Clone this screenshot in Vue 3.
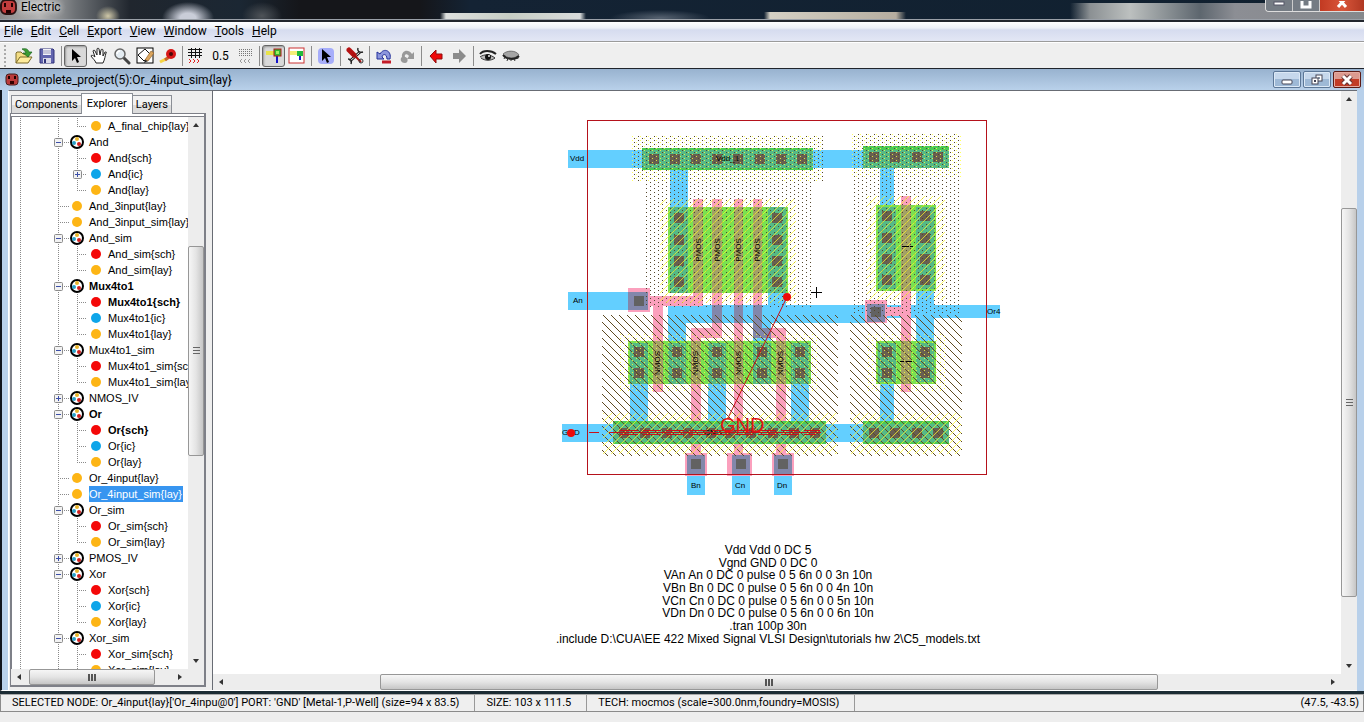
<script setup>
import { ref } from 'vue'

const menus = ['File', 'Edit', 'Cell', 'Export', 'View', 'Window', 'Tools', 'Help']

// [level, kind, label, expander, bold, last child]
const treeRows = [
  [2, 'lay', 'A_final_chip{lay}', '', false, true],
  [1, 'group', 'And', '-'],
  [2, 'sch', 'And{sch}'],
  [2, 'ic', 'And{ic}', '+'],
  [2, 'lay', 'And{lay}', '', false, true],
  [1, 'lay', 'And_3input{lay}'],
  [1, 'lay', 'And_3input_sim{lay}'],
  [1, 'group', 'And_sim', '-'],
  [2, 'sch', 'And_sim{sch}'],
  [2, 'lay', 'And_sim{lay}', '', false, true],
  [1, 'group', 'Mux4to1', '-', true],
  [2, 'sch', 'Mux4to1{sch}', '', true],
  [2, 'ic', 'Mux4to1{ic}'],
  [2, 'lay', 'Mux4to1{lay}', '', false, true],
  [1, 'group', 'Mux4to1_sim', '-'],
  [2, 'sch', 'Mux4to1_sim{sch}'],
  [2, 'lay', 'Mux4to1_sim{lay}', '', false, true],
  [1, 'group', 'NMOS_IV', '+'],
  [1, 'group', 'Or', '-', true],
  [2, 'sch', 'Or{sch}', '', true],
  [2, 'ic', 'Or{ic}'],
  [2, 'lay', 'Or{lay}', '', false, true],
  [1, 'lay', 'Or_4input{lay}'],
  [1, 'lay', 'Or_4input_sim{lay}'],
  [1, 'group', 'Or_sim', '-'],
  [2, 'sch', 'Or_sim{sch}'],
  [2, 'lay', 'Or_sim{lay}', '', false, true],
  [1, 'group', 'PMOS_IV', '+'],
  [1, 'group', 'Xor', '-'],
  [2, 'sch', 'Xor{sch}'],
  [2, 'ic', 'Xor{ic}'],
  [2, 'lay', 'Xor{lay}', '', false, true],
  [1, 'group', 'Xor_sim', '-'],
  [2, 'sch', 'Xor_sim{sch}'],
  [2, 'lay', 'Xor_sim{lay}', '', false, true],
].map(([level, kind, label, expander = '', bold = false, last = false]) => ({
  level, kind, label, expander, bold, last,
}))
const selected = ref('Or_4input_sim{lay}')
const dotColor = { sch: '#f40808', ic: '#0ea5e9', lay: '#fdb515' }

// Layout geometry: [x, y, width, height]
const metal = [
  [568, 150, 300, 18], [670, 168, 18, 40], [568, 292, 80, 18],
  [668, 305, 218, 18], [886, 305, 114, 13], [668, 323, 18, 18], [768, 293, 18, 12],
  [753, 323, 18, 18], [630, 384, 18, 38], [708, 384, 18, 38], [791, 384, 18, 38],
  [562, 424, 302, 18], [687, 455, 18, 40], [732, 455, 18, 40], [774, 455, 18, 40],
  [880, 168, 14, 38], [916, 291, 18, 50], [880, 384, 14, 38],
]
const poly = [
  [693, 199, 10, 107], [712, 199, 10, 139], [734, 199, 9, 256], [753, 199, 9, 139],
  [649, 296, 54, 10], [653, 306, 10, 86], [691, 328, 31, 10], [691, 338, 10, 117],
  [762, 328, 24, 10], [776, 338, 10, 117], [628, 288, 22, 24],
  [685, 453, 22, 23], [727, 453, 25, 23], [772, 453, 22, 23],
  [901, 196, 10, 196], [887, 307, 14, 9], [865, 300, 22, 23],
]
const active = [
  [668, 207, 120, 86], [628, 341, 183, 43], [876, 205, 60, 86], [876, 341, 60, 43],
]
const bars = [[642, 148, 171, 22], [863, 146, 86, 22], [613, 421, 213, 23], [863, 421, 86, 23]]
const teal = [
  [642, 150, 171, 18], [863, 150, 86, 18], [613, 424, 213, 18], [863, 424, 86, 18],
  [670, 207, 18, 86], [768, 207, 18, 86],
  [630, 343, 18, 41], [668, 343, 18, 41], [708, 343, 18, 41], [753, 343, 18, 41], [791, 343, 18, 41],
  [878, 207, 18, 82], [916, 207, 18, 82], [878, 343, 18, 39], [916, 343, 18, 39],
]
const olive = [
  [693, 207, 10, 86], [712, 207, 10, 86], [734, 207, 9, 86], [753, 207, 9, 86],
  [653, 341, 10, 43], [691, 341, 10, 43], [734, 341, 9, 43], [776, 341, 10, 43],
  [901, 205, 10, 86], [901, 341, 10, 43],
]
const purple = [
  [628, 292, 20, 18], [712, 305, 10, 18], [734, 305, 9, 18], [753, 305, 9, 23], [753, 328, 18, 10],
  [687, 455, 18, 20], [732, 455, 18, 20], [774, 455, 18, 20], [867, 304, 18, 18],
]
const cut = (xs, ys) => xs.flatMap((x) => ys.map((y) => [x - 5, y - 5, 10, 10]))
const cuts = [
  ...cut([654, 675, 696, 717, 738, 760, 781, 802], [159]),
  ...cut([679, 777], [218, 240, 261, 282]),
  ...cut([639, 677, 717, 762, 800], [352, 373]),
  ...cut([624, 645, 667, 688, 711, 730, 751, 773, 794, 815], [433]),
  ...cut([874, 895, 917, 938], [157, 433]),
  ...cut([887, 925], [216, 238, 259, 280]),
  ...cut([887, 925], [352, 373]),
]
const vias = cut([639], [301]).concat(cut([696, 741, 783], [464]), cut([876], [312]))
const layers = [
  ['#63cfff', metal], ['#fba0bd', poly], ['#7ae250', active], ['#4acb55', bars],
  ['#55b986', teal], ['#a3a166', olive], ['#8287ab', purple], ['#685f50', cuts], ['#626262', vias],
]

// Stipple patterns, one pixel at a time, as short horizontal strokes
const stipple = (rects, test) => {
  let d = ''
  for (const [x0, y0, w, h] of rects)
    for (let y = y0; y < y0 + h; y++)
      for (let x = x0; x < x0 + w; x++) if (test(x, y)) d += `M${x} ${y + 0.5}h1`
  return d
}
const dots = (shift) => (x, y) =>
  ((x + shift) % 8 === 0 && y % 4 === 0) || ((x + shift) % 8 === 4 && y % 4 === 2)
const textures = [
  ['#54462c', stipple([[643, 135, 170, 172], [631, 135, 12, 47], [813, 135, 11, 47], [851, 133, 110, 181]], dots(2))],
  ['#5e4a22', stipple([[602, 315, 236, 141], [850, 315, 112, 141]], (x, y) => (x - y + 800) % 8 === 0)],
  ['#ffff3ccc', stipple([[631, 135, 193, 47], [851, 133, 110, 44], [619, 333, 200, 59], [867, 333, 79, 59]], dots(0))],
  ['#fbf628bb', stipple([[660, 199, 136, 104], [867, 196, 78, 104], [603, 413, 234, 41], [851, 413, 110, 41]], (x, y) => (x + y) % 8 === 0)],
]
const ports = [
  [570, 161, 'Vdd'], [573, 303, 'An'], [562, 435, 'GND'], [691, 488, 'Bn'], [735, 488, 'Cn'],
  [777, 488, 'Dn'], [987, 314, 'Or4'], [716, 161, 'Vdd_1'], [704, 435, 'GND'],
]
const gates = [
  [701, 250, 'PMOS'], [720, 250, 'PMOS'], [741, 250, 'PMOS'], [760, 250, 'PMOS'],
  [660, 363, 'NMOS'], [698, 363, 'NMOS'], [741, 363, 'NMOS'], [783, 363, 'NMOS'],
]
const spice = [
  [554, 'Vdd Vdd 0 DC 5'],
  [567, 'Vgnd GND 0 DC 0'],
  [579, 'VAn An 0 DC 0 pulse 0 5 6n 0 0 3n 10n'],
  [592, 'VBn Bn 0 DC 0 pulse 0 5 6n 0 0 4n 10n'],
  [605, 'VCn Cn 0 DC 0 pulse 0 5 6n 0 0 5n 10n'],
  [617, 'VDn Dn 0 DC 0 pulse 0 5 6n 0 0 6n 10n'],
  [630, '.tran 100p 30n'],
  [643, '.include D:\\CUA\\EE 422 Mixed Signal VLSI Design\\tutorials hw 2\\C5_models.txt'],
]
</script>

<template>
  <div class="app">
    <header class="titlebar">
      <svg class="logo" width="17" height="16" viewBox="0 0 17 16">
        <rect x="1" y="0" width="15" height="14" rx="5" fill="#c23d3d" stroke="#2a1010" stroke-width="2" />
        <path d="M5 3v4M12 3v4" stroke="#200" stroke-width="2" />
        <path d="M6 10h5v3h-5z" fill="#200" />
      </svg>
      <span class="app-name">Electric</span>
      <div class="frame-buttons">
        <button aria-label="Minimize"><svg width="12" height="6"><rect x="1" y="1" width="10" height="3" fill="#fff" stroke="#556" /></svg></button>
        <button aria-label="Maximize"><svg width="12" height="9"><rect x="2" y="-3" width="8" height="9" fill="none" stroke="#fff" stroke-width="3" /></svg></button>
        <button class="close" aria-label="Close"><svg width="12" height="9"><path d="M2-3 10 6M10-3 2 6" stroke="#fff" stroke-width="3" /></svg></button>
      </div>
    </header>

    <nav class="menubar">
      <button v-for="m in menus" :key="m"><u>{{ m[0] }}</u>{{ m.slice(1) }}</button>
    </nav>

    <div class="toolbar">
      <button aria-label="Open"><svg width="18" height="18" viewBox="0 0 18 18">
        <path d="M1 16V6l1-1h4l2 2h5v3" fill="#f3dd84" stroke="#7b6a2a" />
        <path d="M1 16 5 10h12l-4 6z" fill="#ffec9c" stroke="#7b6a2a" />
        <path d="M7 2c4-1 6 0 7 3h3l-4 5-5-4h3c-1-2-2-3-4-4z" fill="#3b9b32" stroke="#17611a" stroke-width=".7" />
      </svg></button>
      <button aria-label="Save"><svg width="18" height="18" viewBox="0 0 18 18">
        <path d="M2 2h13l1 1v13H2z" fill="#6265ae" stroke="#30337a" />
        <rect x="5" y="2" width="8" height="6" fill="#f2f2f8" /><path d="M5 4h8M5 6h8" stroke="#99b" />
        <rect x="5" y="11" width="8" height="5" fill="#d8d8e8" /><rect x="6" y="12" width="2" height="4" fill="#30337a" />
      </svg></button>
      <i class="sep"></i>
      <button class="pressed" aria-label="Select"><svg width="18" height="18" viewBox="0 0 18 18">
        <path d="M5 2v12l3-3 2 5 2-1-2-5h4z" fill="#000" />
      </svg></button>
      <button aria-label="Pan"><svg width="18" height="18" viewBox="0 0 18 18">
        <path d="M6 16c-1-3-3-4-5-7 0-1 2-1 4 1L3 4c0-1 2-1 2 0l2 4V2c0-1 2-1 2 0l1 6 1-5c0-1 2-1 2 0v6l2-4c1 0 2 0 1 1-1 3-1 6-3 10z" fill="#fff" stroke="#222" />
      </svg></button>
      <button aria-label="Zoom"><svg width="18" height="18" viewBox="0 0 18 18">
        <path d="m11 11 5 5" stroke="#444" stroke-width="3" stroke-linecap="round" />
        <circle cx="7" cy="7" r="5" fill="#e4ecf2" stroke="#666" stroke-width="1.5" />
        <path d="M4 7c0-2 1-3 3-3" stroke="#fff" stroke-width="1.5" fill="none" />
      </svg></button>
      <button aria-label="Outline edit"><svg width="18" height="18" viewBox="0 0 18 18">
        <rect x="1" y="1" width="16" height="15" fill="#fff" stroke="#000" />
        <path d="m2 8 7-6 6 6-7 6z" fill="none" stroke="#111" />
        <path d="m9 13 6-9 3 2-6 8z" fill="#dba55e" stroke="#8a5a20" stroke-width=".6" /><path d="m9 13-1 3 4-2z" fill="#222" />
      </svg></button>
      <button aria-label="Measure"><svg width="18" height="18" viewBox="0 0 18 18">
        <path d="m1 15 8-4" stroke="#f5d442" stroke-width="3" /><path d="m6 13 4-3" stroke="#c6632c" stroke-width="3" />
        <circle cx="12" cy="7" r="5" fill="#d81818" /><circle cx="12" cy="7" r="2" fill="#4a0808" />
      </svg></button>
      <i class="sep"></i>
      <button class="narrow" aria-label="Full grid"><svg width="18" height="18" viewBox="0 0 18 18" shape-rendering="crispEdges">
        <path d="M5.500 1v10M9.500 1v10M13.500 1v10M2 2.500h14M2 5.500h14M2 8.500h14" stroke="#111" />
        <path d="m3 12 2 2-2 2m4-4 2 2-2 2m4-4 2 2-2 2" fill="none" stroke="#d22" shape-rendering="auto" />
      </svg></button>
      <button class="grid-size">0.5</button>
      <button class="narrow" aria-label="Small grid"><svg width="18" height="18" viewBox="0 0 18 18">
        <path d="M2 2.500h14M2 4.500h14M2 6.500h14M2 8.500h14" stroke="#777" stroke-dasharray="1 1" />
        <path d="m5 12-2 2 2 2m4-4-2 2 2 2m4-4-2 2 2 2" fill="none" stroke="#999" />
      </svg></button>
      <i class="sep"></i>
      <button class="pressed" aria-label="Select objects"><svg width="18" height="18" viewBox="0 0 18 18">
        <path d="M1 4h8v4H1z" fill="#e8e34a" /><path d="M12 8v8" stroke="#1414c8" stroke-width="2" />
        <rect x="9" y="2" width="7" height="7" fill="#2fb92f" stroke="#b01818" /><rect x="11" y="4" width="3" height="3" fill="#9fef5f" />
      </svg></button>
      <button aria-label="Select area"><svg width="18" height="18" viewBox="0 0 18 18">
        <rect x="1" y="1" width="15" height="15" fill="#fff" stroke="#c33" /><path d="M2 4h7v4H2z" fill="#f4ee78" />
        <path d="M12 7v6" stroke="#1414c8" stroke-width="2" /><rect x="9" y="4" width="6" height="5" fill="#23b93b" />
      </svg></button>
      <i class="sep"></i>
      <button aria-label="Special select"><svg width="18" height="18" viewBox="0 0 18 18">
        <rect x="1" y="1" width="16" height="16" rx="4" fill="#a6adfa" /><path d="M5 2v12l3-3 2 5 2-1-2-5h4z" fill="#000" />
      </svg></button>
      <i class="sep"></i>
      <button aria-label="Preferences"><svg width="18" height="18" viewBox="0 0 18 18">
        <path d="m4 14 10-9" stroke="#222" stroke-width="3" /><path d="m4 14 10-9" stroke="#fff" />
        <path d="M12 1c-1 3 1 5 5 4M2 12c3 0 4 2 3 5" fill="none" stroke="#222" stroke-width="1.5" />
        <path d="m3 3 5 5" stroke="#b51212" stroke-width="5" stroke-linecap="round" /><path d="m7 7 8 8" stroke="#a11" stroke-width="2" />
        <circle cx="15" cy="14" r="2" fill="none" stroke="#333" />
      </svg></button>
      <i class="sep"></i>
      <button aria-label="Undo"><svg width="18" height="18" viewBox="0 0 18 18">
        <path d="M2 5v7h7L7 10c1-4 5-3 5 2h3c2-8-6-12-10-5z" fill="#8c96dc" stroke="#23309a" />
        <path d="M7 15h9" stroke="#c41c28" stroke-width="3" />
      </svg></button>
      <button aria-label="Redo"><svg width="18" height="18" viewBox="0 0 18 18">
        <path d="M16 5v7H9l2-3c-2-3-5-2-4 1 3 0 4 6 0 6-5 0-5-5-3-6-1-6 6-9 10-3z" fill="#999" />
      </svg></button>
      <i class="sep"></i>
      <button aria-label="Back"><svg width="18" height="18" viewBox="0 0 18 18"><path d="m3 9 6-6v4h6v5H9v4z" fill="#ef0808" stroke="#910c0c" /></svg></button>
      <button aria-label="Forward"><svg width="18" height="18" viewBox="0 0 18 18"><path d="m16 9-7-7v4H3v6h6v4z" fill="#8b8b8b" /></svg></button>
      <i class="sep"></i>
      <button aria-label="Expand"><svg width="18" height="18" viewBox="0 0 18 18">
        <path d="M1 7c3-4 11-4 16 0" fill="none" stroke="#222" stroke-width="2" /><path d="M1 10c4-3 10-3 15 1-4 3-10 3-14 0" fill="#bbb" stroke="#333" />
        <circle cx="9" cy="10" r="3" fill="#111" /><circle cx="10" cy="9" r="1" fill="#eee" />
      </svg></button>
      <button aria-label="Unexpand"><svg width="18" height="18" viewBox="0 0 18 18">
        <path d="M1 7C5 3 14 3 17 8c-4 4-12 4-16-1z" fill="#a5a5a5" stroke="#555" stroke-width=".7" />
        <path d="M1 8c4 5 12 5 16 1" fill="none" stroke="#222" stroke-width="2" />
        <path d="M3 10l-1 2M6 11l-1 3M9 12v2M12 12l1 2M15 10l1 2" fill="none" stroke="#333" />
      </svg></button>
    </div>

    <section class="document">
      <div class="doc-title">
        <svg width="14" height="14" viewBox="0 0 14 14">
          <rect x="1" y="1" width="12" height="11" rx="3" fill="#bb3b3b" stroke="#472020" />
          <path d="M4 3v3M10 3v3" stroke="#200" stroke-width="2" /><path d="M5 8h4v3H5z" fill="#300" />
        </svg>
        <h1>complete_project(5):Or_4input_sim{lay}</h1>
        <div class="doc-buttons">
          <button aria-label="Minimize cell"><svg width="14" height="12"><rect x="2" y="6" width="10" height="4" rx="1" fill="#fff" stroke="#445" /></svg></button>
          <button aria-label="Restore cell"><svg width="14" height="12">
            <rect x="6" y="1" width="6" height="6" fill="#fff" stroke="#445" /><rect x="8" y="3" width="2" height="2" fill="#89a" />
            <rect x="2" y="4" width="6" height="6" fill="#fff" stroke="#445" /><rect x="4" y="6" width="2" height="2" fill="#445" />
          </svg></button>
          <button class="close" aria-label="Close cell"><svg width="14" height="12">
            <path d="m3 2 8 8M11 2l-8 8" stroke="#633" stroke-width="5" /><path d="m3 2 8 8M11 2l-8 8" stroke="#fff" stroke-width="3" />
          </svg></button>
        </div>
      </div>

      <div class="doc-body">
        <aside class="side">
          <div class="tabs">
            <button>Components</button><button class="current">Explorer</button><button>Layers</button>
          </div>
          <div class="tab-page">
            <div class="tree-area">
              <ul class="tree">
                <li v-for="(row, i) in treeRows" :key="i">
                  <svg :width="row.level === 2 ? 96 : 77" height="16">
                    <g stroke="#8a8a8a" stroke-dasharray="1 1">
                      <path d="M8.500 0v16M46.500 0v16" />
                      <path v-if="row.level === 1" d="M46 8.500h12" />
                      <path v-if="row.level === 2" :d="`M65.5 0V${row.last ? 8 : 16}M65 8.5h10`" />
                    </g>
                    <g v-if="row.expander" :transform="`translate(${row.level === 2 ? 61 : 42} 4)`">
                      <rect x=".5" y=".5" width="8" height="8" rx="1" fill="#f2f2f2" stroke="#8b8b8b" />
                      <path :d="row.expander === '+' ? 'M2 4.500h5M4.500 2v5' : 'M2 4.500h5'" stroke="#3c4fa8" />
                    </g>
                    <g v-if="row.kind === 'group'">
                      <circle cx="65" cy="8" r="6" fill="#fff" stroke="#000" stroke-width="2" />
                      <circle cx="65" cy="5" r="2" fill="#e8b52c" /><circle cx="62" cy="9" r="2" fill="#2aa0c8" />
                      <circle cx="67" cy="10" r="2" fill="#cf1d1d" />
                    </g>
                    <circle v-else :cx="row.level === 2 ? 84 : 65" cy="8" r="5" :fill="dotColor[row.kind]" />
                  </svg>
                  <button
                    :class="{ bold: row.bold, selected: row.label === selected }"
                    @click="selected = row.label"
                  >{{ row.label }}</button>
                </li>
              </ul>
              <div class="scroll vertical">
                <button class="up" aria-label="Scroll tree up"></button>
                <div class="track tree-v"><span class="thumb"></span></div>
                <button class="down" aria-label="Scroll tree down"></button>
              </div>
            </div>
            <div class="scroll horizontal">
              <button class="left" aria-label="Scroll tree left"></button>
              <div class="track tree-h"><span class="thumb"></span></div>
              <button class="right" aria-label="Scroll tree right"></button>
              <span class="corner"></span>
            </div>
          </div>
        </aside>

        <main class="editor">
          <div class="canvas-area">
            <svg class="canvas">
              <g transform="translate(-213 -91)" shape-rendering="crispEdges">
                <g v-for="[fill, rects] in layers" :key="fill" :fill="fill">
                  <rect v-for="([x, y, w, h], i) in rects" :key="i" :x="x" :y="y" :width="w" :height="h" />
                </g>
                <path v-for="[color, d] in textures" :key="color" :d="d" :stroke="color" />
                <path d="M587.500 120.500h399v354h-399z" fill="none" stroke="#b5121b" />
              </g>
              <g transform="translate(-213 -91)">
                <g class="port"><text v-for="([x, y, t], i) in ports" :key="i" :x="x" :y="y">{{ t }}</text></g>
                <g class="port gate">
                  <text v-for="([x, y, t], i) in gates" :key="i" :transform="`translate(${x} ${y}) rotate(-90)`">{{ t }}</text>
                </g>
                <path d="M902 246.500h7M910 246.500h3M900 361.500h4M906 361.500h6" stroke="#000" />
                <path d="M811 292.500h11M816.500 287v11" stroke="#000" />
                <g stroke="#c8101a" fill="none">
                  <path d="M589 432.500h10M609 432.500h212M787 297 728 418" />
                  <path d="M620 430.500h200M620 434.500h196" stroke-dasharray="18 5" />
                </g>
                <circle cx="787" cy="297" r="4" fill="#ee0a0a" /><circle cx="571" cy="433" r="4" fill="#ee0a0a" />
                <text class="gnd" x="720" y="432">GND</text>
                <g class="spice"><text v-for="[y, t] in spice" :key="y" x="768" :y="y">{{ t }}</text></g>
              </g>
            </svg>
            <div class="scroll vertical">
              <button class="up" aria-label="Scroll canvas up"></button>
              <div class="track canvas-v"><span class="thumb"></span></div>
              <button class="down" aria-label="Scroll canvas down"></button>
            </div>
          </div>
          <div class="scroll horizontal">
            <button class="left" aria-label="Scroll canvas left"></button>
            <div class="track canvas-h"><span class="thumb"></span></div>
            <button class="right" aria-label="Scroll canvas right"></button>
            <span class="corner"></span>
          </div>
        </main>
      </div>
    </section>

    <footer class="status">
      <span>SELECTED NODE: Or_4input{lay}['Or_4inpu@0'] PORT: 'GND' [Metal-1,P-Well] (size=94 x 83.5)</span>
      <span>SIZE: 103 x 111.5</span>
      <span>TECH: mocmos (scale=300.0nm,foundry=MOSIS)</span>
      <span class="coords">(47.5, -43.5)</span>
    </footer>
  </div>
</template>

<style>
html, body { height: 100%; overflow: hidden; }
</style>

<style scoped>
* { box-sizing: border-box; }
.app { display: flex; flex-direction: column; height: 100vh; background: #eee; color: #000; font: 11px Roboto, "Noto Sans", sans-serif; }
button { border: 0; padding: 0; margin: 0; background: none; font: inherit; color: inherit; }
svg { display: block; }

.titlebar {
  display: flex; align-items: flex-start; height: 22px; flex: none; overflow: hidden;
  border-bottom: 2px solid #23272e; box-shadow: inset 0 -1px #9aa0a8;
  background:
    radial-gradient(ellipse 12px 10px at 108px 16px, #cfc8a8, transparent),
    radial-gradient(ellipse 26px 16px at 188px 18px, #c9cdd8 30%, transparent),
    radial-gradient(ellipse 20px 14px at 262px 16px, #4e5358, transparent),
    linear-gradient(90deg, transparent 440px, #dde0de 446px, #c6cdc4 510px, #d9dcdc 580px, transparent 586px) 0 13px / 100% 8px no-repeat,
    radial-gradient(ellipse 50px 8px at 660px 18px, #566270, transparent),
    linear-gradient(90deg, transparent 764px, #d4d0c4 770px, #b5ada0 896px, transparent 906px) 0 12px / 100% 9px no-repeat,
    linear-gradient(90deg, transparent 1070px, #8b9093 1090px, #bcc0bf 1130px, #5d666e 1200px, #8c8e94 1235px, #85888c 100%) 0 3px / 100% 20px no-repeat,
    linear-gradient(90deg, #8c8c8c, #b4b4b4 40px, #6e7276 75px, #20262e 130px, #1b2733 240px, #15161a 300px, #15161a 420px, #142334 470px, #10202f 100%);
}
.logo { flex: none; }
.app-name { margin-left: 4px; font-size: 12px; line-height: 15px; text-shadow: 0 0 6px #fff, 0 0 6px #ddd; }
.frame-buttons { display: flex; margin-left: auto; border: 1px solid #ddd; border-top: 0; border-right: 0; border-radius: 0 0 0 4px; overflow: hidden; }
.frame-buttons button { display: flex; justify-content: center; width: 27px; height: 11px; background: #757c84; border-right: 1px solid #ccc; }
.frame-buttons svg { margin-top: 1px; }
.frame-buttons .close { width: 44px; background: linear-gradient(90deg, #c23a22, #d8553a, #b03822); border-right: 0; }

.menubar { display: flex; flex: none; height: 20px; padding-left: 4px; gap: 8px; background: linear-gradient(#fff, #eef1f8 6px, #d6dcef 8px, #e3e7f5); border-bottom: 1px solid #9b9b9b; font-size: 12px; }
.menubar button { line-height: 19px; }
.menubar u { text-underline-offset: 1px; }

.toolbar { display: flex; flex: none; align-items: center; height: 27px; padding-left: 12px; border-bottom: 1px solid #20242c; border-top: 1px solid #fff; background: radial-gradient(circle at 5px 3px, #aaa 1px, transparent 1px) 0 0 / 8px 4px repeat-y, #efefef; }
.toolbar button { display: flex; align-items: center; justify-content: center; width: 23px; height: 22px; }
.toolbar .narrow { width: 20px; }
.toolbar .grid-size { width: 31px; font-size: 12px; }
.toolbar .pressed { border: 1px solid #666; border-radius: 3px; background: #d9d9d9; box-shadow: inset 1px 1px 2px #999; }
.sep { width: 6px; height: 20px; background: linear-gradient(90deg, transparent 3px, #8c8c8c 3px, #8c8c8c 4px, transparent 4px); }

.document { flex: 1; min-height: 0; display: flex; flex-direction: column; background: #b8d0ea; border-bottom: 3px solid #1c2c34; }
.doc-title { display: flex; flex: none; align-items: center; height: 21px; padding: 0 3px 0 5px; background: linear-gradient(#98b2cf, #b9d1ea); }
.doc-title h1 { margin: 0 0 0 3px; font-size: 12px; font-weight: 400; line-height: 20px; }
.doc-buttons { display: flex; gap: 2px; margin-left: auto; }
.doc-buttons button { display: flex; align-items: center; justify-content: center; width: 28px; height: 17px; border: 1px solid #5c7797; border-radius: 2px; background: linear-gradient(#c6d8ec 50%, #9eb9d6 50%); box-shadow: inset 0 0 0 1px #dce9f6; }
.doc-buttons .close { border-color: #5b1a14; background: linear-gradient(#dc9a8f 50%, #c23c26 50%); box-shadow: inset 0 0 0 1px #e5aca2; }

.doc-body { flex: 1; min-height: 0; display: flex; margin: 0 7px 0 0; border-left: 2px solid #10141c; padding-left: 6px; border-bottom: 1px solid #fff; }
.side { flex: none; width: 204px; display: flex; flex-direction: column; padding: 2px 6px 3px 1px; border-left: 1px solid #fff; border-top: 1px solid #70747c; background: #eee; }
.tabs { display: flex; align-items: flex-end; height: 20px; padding-left: 1px; }
.tabs button { height: 18px; padding: 0 3px; border: 1px solid #8b8f96; border-bottom: 0; background: linear-gradient(#f2f2f2 50%, #dcdcdc 50%); line-height: 17px; margin-right: -1px; }
.tabs .current { position: relative; z-index: 1; height: 21px; padding: 0 5px; background: #fff; line-height: 18px; margin-bottom: -1px; }
.tab-page { flex: 1; min-height: 0; display: flex; flex-direction: column; border: 1px solid #7e8088; border-right-width: 2px; border-bottom-width: 2px; padding: 2px 0 0; background: #fff; }
.tree-area { flex: 1; min-height: 0; display: flex; border-top: 1px solid #7e8088; border-left: 1px solid #7e8088; }
.tree { flex: 1; min-width: 0; margin: 0; padding: 1px 0 0; list-style: none; overflow: hidden; background: #fff; }
.tree li { display: flex; height: 16px; white-space: nowrap; font: 11px/16px "Liberation Sans", Arial, sans-serif; }
.tree svg { flex: none; }
.tree button { white-space: nowrap; line-height: 15px; height: 16px; }
.tree .bold { font-weight: 700; }
.tree .selected { background: #3795f0; color: #fff; padding-right: 1px; }

.editor { flex: 1; min-width: 0; display: flex; flex-direction: column; border-left: 1px solid #686c74; border-top: 1px solid #686c74; background: #fff; }
.canvas-area { flex: 1; min-height: 0; display: flex; }
.canvas { flex: 1; min-width: 0; height: 100%; background: #fff; }
.port { font: 8px "Liberation Sans", Arial, sans-serif; }
.gate { text-anchor: middle; }
.gnd { font: 20px "Liberation Sans", Arial, sans-serif; fill: #e01414; }
.spice { font: 12px "Liberation Sans", Arial, sans-serif; text-anchor: middle; }

.scroll { display: flex; flex: none; background: #ededed; }
.vertical { flex-direction: column; width: 16px; }
.horizontal { height: 16px; }
.scroll button { display: flex; flex: none; width: 16px; height: 16px; align-items: center; justify-content: center; }
.scroll button::before { content: ""; border: 3px solid transparent; }
.scroll .up::before { border-bottom: 4px solid #333; border-top: 0; }
.scroll .down::before { border-top: 4px solid #333; border-bottom: 0; }
.scroll .left::before { border-right: 4px solid #333; border-left: 0; }
.scroll .right::before { border-left: 4px solid #333; border-right: 0; }
.track { flex: 1; min-height: 0; min-width: 0; display: grid; }
.tree-v { grid-template-rows: 113fr 210fr 197fr; }
.tree-h { grid-template-columns: 2fr 123fr 17fr; }
.canvas-v { grid-template-rows: 101fr 389fr 61fr; }
.canvas-h { grid-template-columns: 151fr 778fr 167fr; }
.thumb { display: flex; align-items: center; justify-content: center; border: 1px solid #979797; border-radius: 2px; background: linear-gradient(#f6f6f6, #e4e4e4 50%, #c6c6c6); }
.horizontal .thumb { grid-column: 2; }
.vertical .thumb { grid-row: 2; background: linear-gradient(90deg, #f6f6f6, #e4e4e4 50%, #c6c6c6); }
.thumb::before { content: ""; width: 8px; height: 7px; background: repeating-linear-gradient(90deg, #555 0 2px, transparent 2px 3px); }
.vertical .thumb::before { width: 7px; height: 8px; background: repeating-linear-gradient(#666 0 1px, transparent 1px 3px); }
.corner { width: 16px; }

.status { display: flex; flex: none; height: 18px; margin-bottom: 10px; border: 1px solid #8b8b8b; border-top-color: #aaa; background: #efefef; line-height: 16px; }
.status span { padding: 0 15px 0 11px; border-right: 1px solid #999; white-space: nowrap; }
.status .coords { margin-left: auto; padding-right: 4px; border-right: 0; }
</style>
